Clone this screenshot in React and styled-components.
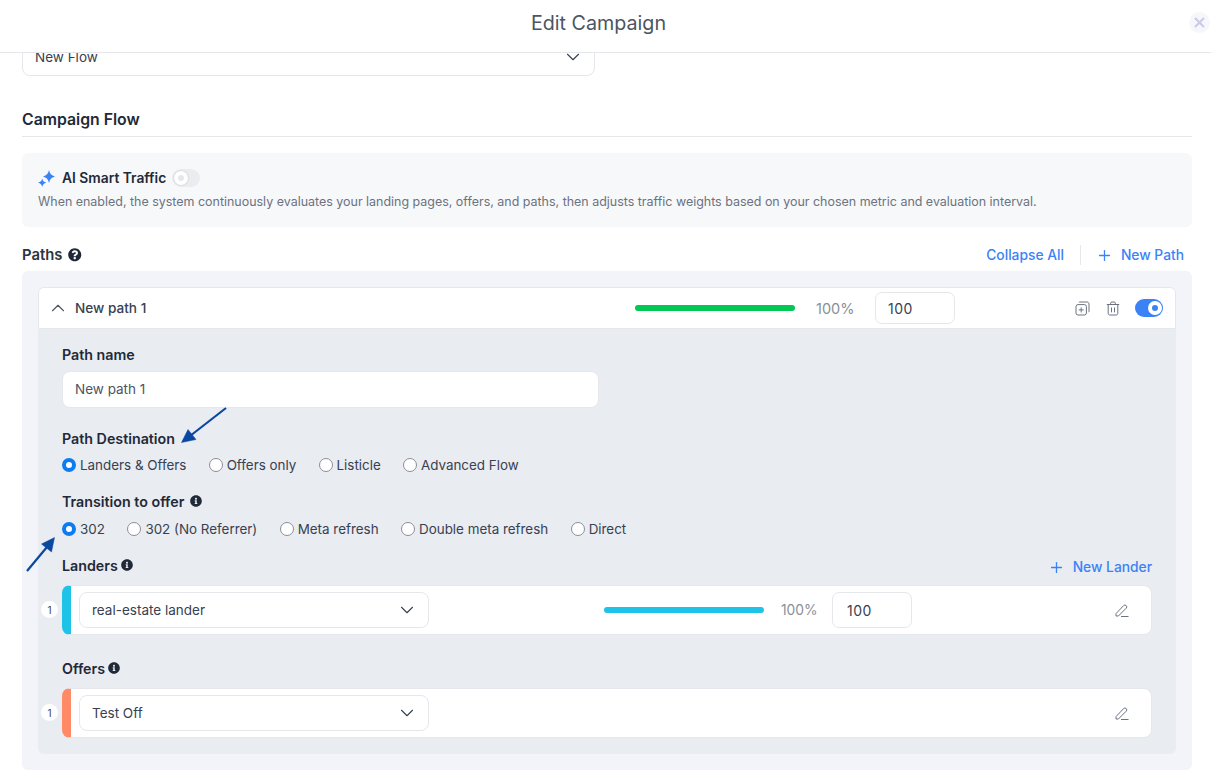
import React from 'react';
import styled, { createGlobalStyle } from 'styled-components';
import { ChevronDown, ChevronUp, Plus } from 'lucide-react';
import { FaInfoCircle, FaQuestionCircle } from 'react-icons/fa';

const GlobalStyle = createGlobalStyle`
  html, body {
    margin: 0;
    padding: 0;
    height: 100%;
    background: #fff;
    overflow: hidden;
  }
  *, *::before, *::after {
    box-sizing: border-box;
  }
  body {
    font-family: Inter, "Liberation Sans", sans-serif;
    color: #1f2937;
  }
`;

const Page = styled.div`
  position: relative;
  width: 1211px;
  height: 779px;
  overflow: hidden;
  display: flex;
  flex-direction: column;
`;

const Header = styled.header`
  flex: 0 0 53px;
  padding-right: 14px;
  display: flex;
  align-items: center;
  justify-content: center;
  position: relative;
  border-bottom: 1px solid #e5e7eb;
  background: #fff;
  z-index: 2;
`;

const Title = styled.h1`
  margin: 0 0 7px;
  font-size: 19.7px;
  line-height: 24px;
  font-weight: 400;
  color: #4b5563;
`;

const CloseBtn = styled.button`
  position: absolute;
  right: 1px;
  top: 12px;
  width: 21px;
  height: 21px;
  padding: 0;
  border: 0;
  border-radius: 50%;
  background: #f7f7fb;
  color: #c9cce3;
  display: flex;
  align-items: center;
  justify-content: center;
`;

const Content = styled.main`
  flex: 1;
  padding: 0 19px 0 22px;
`;

const FlowSelect = styled.div`
  width: 573px;
  height: 38px;
  margin-top: -15px;
  padding: 0 10px 0 12px;
  display: flex;
  align-items: center;
  justify-content: space-between;
  border: 1px solid #e5e7eb;
  border-radius: 8px;
  background: #fff;
  font-size: 13.5px;
  color: #374151;
`;

const SectionTitle = styled.h2`
  margin: 34px 0 16px;
  padding-bottom: 7px;
  height: 27px;
  border-bottom: 1px solid #e5e7eb;
  font-size: 15.8px;
  line-height: 19px;
  font-weight: 600;
  color: #1f2937;
`;

const AiPanel = styled.section`
  height: 74px;
  padding: 16px;
  border-radius: 6px;
  background: #f7f8fa;
`;

const AiRow = styled.div`
  display: flex;
  align-items: center;
  height: 18px;
`;

const AiName = styled.span`
  margin: 0 6px 0 7px;
  font-size: 13.8px;
  font-weight: 600;
  color: #1f2937;
`;

const AiDesc = styled.p`
  margin: 6px 0 0;
  font-size: 12.46px;
  line-height: 18px;
  color: #6b7280;
`;

const Toggle = styled.span`
  position: relative;
  display: inline-block;
  width: 28px;
  height: 18px;
  border-radius: 9px;
  background: ${(p) => (p.$on ? '#3b82f6' : '#eaecef')};

  &::after {
    content: '';
    position: absolute;
    top: 2px;
    left: ${(p) => (p.$on ? 13 : 2)}px;
    width: 14px;
    height: 14px;
    border-radius: 50%;
    border: 4px solid #fff;
    background: ${(p) => (p.$on ? '#3b82f6' : '#e5e7eb')};
    box-shadow: ${(p) => (p.$on ? 'none' : '0 0 2px rgba(0, 0, 0, 0.2)')};
  }
`;

const PathsBar = styled.div`
  height: 20px;
  margin: 18px 8px 6px 0;
  display: flex;
  align-items: center;
`;

const PathsTitle = styled.span`
  display: flex;
  align-items: center;
  gap: 6px;
  font-size: 14.8px;
  font-weight: 600;
  color: #2b3441;
  margin-right: auto;
`;

const LinkBtn = styled.span`
  display: inline-flex;
  align-items: center;
  gap: 7.5px;
  font-size: 13.8px;
  font-weight: 500;
  color: #3b82f6;
`;

const NewLander = styled(LinkBtn)`
  padding-top: 2px;
`;

const BarSep = styled.span`
  width: 1px;
  height: 20px;
  margin: 0 15.5px 0 16px;
  background: #e5e7eb;
`;

const PathsPanel = styled.section`
  height: 499px;
  padding: 16px;
  border-radius: 6px;
  background: #f3f4f9;
`;

const PathBox = styled.div`
  height: 467px;
  border-radius: 6px;
  background: #e9ecf1;
  overflow: hidden;
`;

const PathHead = styled.div`
  height: 42px;
  padding-right: 12px;
  display: flex;
  align-items: center;
  background: #fff;
  border: 1px solid #e5e7eb;
  border-radius: 6px 6px 0 0;
`;

const Chevron = styled.span`
  display: flex;
  width: 36px;
  padding-left: 8px;
  color: #4b5563;
`;

const PathName = styled.span`
  flex: 0 0 560px;
  font-size: 13.6px;
  font-weight: 500;
  color: #374151;
`;

const Progress = styled.span`
  flex: 0 0 160px;
  height: 6px;
  border-radius: 3px;
  background: ${(p) => p.$color};
`;

const Pct = styled.span`
  flex: 0 0 ${(p) => p.$w}px;
  min-width: 0;
  margin-left: ${(p) => p.$gap}px;
  white-space: nowrap;
  font-size: ${(p) => p.$size}px;
  color: #8a8f98;
`;

const Weight = styled.span`
  flex: 0 0 80px;
  height: ${(p) => p.$h}px;
  margin-left: ${(p) => p.$gap}px;
  padding-left: ${(p) => p.$pad}px;
  display: flex;
  align-items: center;
  border: 1px solid #e5e7eb;
  border-radius: 7px;
  background: #fff;
  font-size: 14px;
  letter-spacing: 0.5px;
  color: #374151;
`;

const Actions = styled.span`
  margin-left: auto;
  display: flex;
  align-items: center;
  gap: 16px;
  color: #6b7280;

  & > :last-child {
    margin-left: -1px;
  }
`;

const PathBody = styled.div`
  padding: 17px 24px 0;
`;

const Label = styled.div`
  display: flex;
  align-items: center;
  gap: ${(p) => p.$gap}px;
  height: 18px;
  padding-bottom: 2px;
  margin-top: ${(p) => p.$top || 0}px;
  font-size: 14.25px;
  font-weight: 600;
  color: #1f2937;
`;

const NameInput = styled.div`
  width: 537px;
  height: 37px;
  margin-top: 7px;
  padding: 0 0 2px 12px;
  display: flex;
  align-items: center;
  border: 1px solid #e5e7eb;
  border-radius: 8px;
  background: #fff;
  font-size: 13.5px;
  color: #4b5563;
`;

const Radios = styled.div`
  display: flex;
  align-items: center;
  height: 18px;
  margin-top: ${(p) => p.$top}px;
`;

const RadioItem = styled.label`
  display: inline-flex;
  align-items: center;
  gap: 4px;
  margin-right: ${(p) => p.$gap}px;
  font-size: 13.4px;
  color: #374151;
`;

const Dot = styled.span`
  width: 14px;
  height: 14px;
  border-radius: 50%;
  background: #fff;
  border: ${(p) => (p.$on ? '4px solid #0d7cf2' : '1px solid #8a8f98')};
`;

const LabelRow = styled.div`
  display: flex;
  align-items: center;
  justify-content: space-between;
  height: 20px;
  margin-top: 18px;
`;

const Card = styled.div`
  position: relative;
  height: 50px;
  margin-top: ${(p) => p.$top}px;
  padding-right: 22px;
  display: flex;
  align-items: center;
  border: 1px solid #e5e7eb;
  border-left: 9px solid ${(p) => p.$accent};
  border-radius: 8px;
  background: #fff;
`;

const NumBadge = styled.span`
  position: absolute;
  left: -30px;
  top: 15px;
  width: 17px;
  height: 17px;
  border-radius: 50%;
  background: #fff;
  font-size: 10px;
  color: #374151;
  display: flex;
  align-items: center;
  justify-content: center;
`;

const CardSelect = styled.div`
  flex: 0 0 350px;
  height: 36px;
  margin-left: 8px;
  margin-right: 175px;
  padding: 0 10px 0 12px;
  display: flex;
  align-items: center;
  justify-content: space-between;
  border: 1px solid #e5e7eb;
  border-radius: 8px;
  font-size: 13.5px;
  color: #374151;
`;

const EditBtn = styled.span`
  margin-left: auto;
  display: flex;
  color: #6b7280;
`;

const ArrowLayer = styled.svg`
  position: absolute;
  left: 0;
  top: 0;
  pointer-events: none;
`;

const EditIcon = () => (
  <svg width="14" height="13" viewBox="0 0 14 13" fill="none" stroke="currentColor" strokeWidth="1">
    <path d="M1 12V9.6L8.6 1.6a1.8 1.8 0 0 1 2.6 0 1.8 1.8 0 0 1 0 2.6L3.4 12H1z" />
    <path d="M6 12.5h7.5" />
  </svg>
);

const CopyIcon = () => (
  <svg width="15" height="15" viewBox="0 0 15 15" fill="none" stroke="currentColor" strokeWidth="1">
    <rect x="1" y="3.6" width="10.4" height="10.4" rx="2" />
    <path d="M3.8 1.4c.3-.3.7-.4 1-.4h7.2c1.1 0 2 .9 2 2v7.2c0 .4-.1.7-.4 1" />
    <path d="M6.2 6.4v5M3.7 8.9h5" />
  </svg>
);

const TrashIcon = () => (
  <svg width="14" height="15" viewBox="0 0 14 15" fill="none" stroke="currentColor" strokeWidth="1">
    <path d="M.8 3.5h12.4M4.6 3.3V2.2c0-.7.5-1.2 1.2-1.2h2.4c.7 0 1.2.5 1.2 1.2v1.1" />
    <path d="M2.2 3.5v9c0 .9.6 1.5 1.5 1.5h6.6c.9 0 1.5-.6 1.5-1.5v-9" />
    <path d="M5.5 6.5v4.8M8.5 6.5v4.8" />
  </svg>
);

const SparkIcon = () => (
  <svg width="17" height="17" viewBox="0 0 17 17" fill="#3b82f6">
    <path d="M11 0C11.6 3.5 13.4 5.6 17 6.5 13.4 7.4 11.6 9.5 11 13 10.4 9.5 8.6 7.4 5 6.5 8.6 5.6 10.4 3.5 11 0z" />
    <path d="M4.2 8.5C4.6 10.7 5.8 12.1 8.4 12.7 5.8 13.3 4.6 14.8 4.2 17 3.8 14.8 2.6 13.3 0 12.7 2.6 12.1 3.8 10.7 4.2 8.5z" />
  </svg>
);

const destinations = ['Landers & Offers', 'Offers only', 'Listicle', 'Advanced Flow'];
const transitions = ['302', '302 (No Referrer)', 'Meta refresh', 'Double meta refresh', 'Direct'];

const App = () => {
  return (
    <Page>
      <GlobalStyle />
      <Header>
        <Title>Edit Campaign</Title>
        <CloseBtn aria-label="Close">
          <svg width="11" height="11" viewBox="0 0 11 11" stroke="currentColor" strokeWidth="2.2">
            <path d="M1 1l9 9M10 1l-9 9" />
          </svg>
        </CloseBtn>
      </Header>
      <Content>
        <FlowSelect>
          New Flow
          <ChevronDown size={22} strokeWidth={1.2} />
        </FlowSelect>
        <SectionTitle>Campaign Flow</SectionTitle>
        <AiPanel>
          <AiRow>
            <SparkIcon />
            <AiName>AI Smart Traffic</AiName>
            <Toggle />
          </AiRow>
          <AiDesc>
            When enabled, the system continuously evaluates your landing pages, offers, and paths, then adjusts traffic weights based on your chosen metric and evaluation interval.
          </AiDesc>
        </AiPanel>
        <PathsBar>
          <PathsTitle>
            Paths <FaQuestionCircle size={13.5} color="#1f2937" />
          </PathsTitle>
          <LinkBtn>Collapse All</LinkBtn>
          <BarSep />
          <LinkBtn>
            <Plus size={17} strokeWidth={1.8} /> New Path
          </LinkBtn>
        </PathsBar>
        <PathsPanel>
          <PathBox>
            <PathHead>
              <Chevron>
                <ChevronUp size={22} strokeWidth={1.2} />
              </Chevron>
              <PathName>New path 1</PathName>
              <Progress $color="#00c853" />
              <Pct $w={38} $gap={21} $size={14.5}>100%</Pct>
              <Weight $h={32} $gap={21} $pad={12}>100</Weight>
              <Actions>
                <CopyIcon />
                <TrashIcon />
                <Toggle $on />
              </Actions>
            </PathHead>
            <PathBody>
              <Label>Path name</Label>
              <NameInput>New path 1</NameInput>
              <Label $top={22}>Path Destination</Label>
              <Radios $top={8}>
                {destinations.map((d, i) => (
                  <RadioItem key={d} $gap={22.2}>
                    <Dot $on={i === 0} />
                    {d}
                  </RadioItem>
                ))}
              </Radios>
              <Label $top={19} $gap={6}>
                Transition to offer <FaInfoCircle size={12} />
              </Label>
              <Radios $top={9}>
                {transitions.map((t, i) => (
                  <RadioItem key={t} $gap={22.5}>
                    <Dot $on={i === 0} />
                    {t}
                  </RadioItem>
                ))}
              </Radios>
              <LabelRow>
                <Label $gap={3}>
                  Landers <FaInfoCircle size={12} />
                </Label>
                <NewLander>
                  <Plus size={17} strokeWidth={1.8} /> New Lander
                </NewLander>
              </LabelRow>
              <Card $accent="#1fc3e8" $top={9}>
                <NumBadge>1</NumBadge>
                <CardSelect>
                  real-estate lander
                  <ChevronDown size={22} strokeWidth={1.2} />
                </CardSelect>
                <Progress $color="#1fc3e8" />
                <Pct $w={35} $gap={17} $size={13.8}>100%</Pct>
                <Weight $h={36} $gap={16} $pad={14}>100</Weight>
                <EditBtn>
                  <EditIcon />
                </EditBtn>
              </Card>
              <Label $gap={3} $top={25}>
                Offers <FaInfoCircle size={12} />
              </Label>
              <Card $accent="#ff8a65" $top={10}>
                <NumBadge>1</NumBadge>
                <CardSelect>
                  Test Off
                  <ChevronDown size={22} strokeWidth={1.2} />
                </CardSelect>
                <EditBtn>
                  <EditIcon />
                </EditBtn>
              </Card>
            </PathBody>
          </PathBox>
        </PathsPanel>
      </Content>
      <ArrowLayer width="1211" height="779" fill="#0a47a0" stroke="#0a47a0">
        <path d="M226 408L190 436" strokeWidth="2.2" />
        <path d="M181.5 442.5L188 429.5L196 439.5z" strokeWidth="0.5" />
        <path d="M27 571L47 547" strokeWidth="2.2" />
        <path d="M54.5 537.5L51.5 552L41.5 544z" strokeWidth="0.5" />
      </ArrowLayer>
    </Page>
  );
};

export default App;
